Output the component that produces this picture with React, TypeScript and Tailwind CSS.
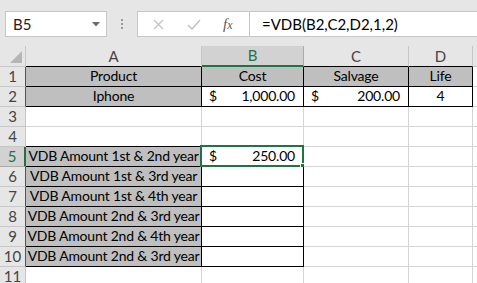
import React from "react";

const COLS = [
  { key: "A", w: "w-[176px]" },
  { key: "B", w: "w-[102px]" },
  { key: "C", w: "w-[105px]" },
  { key: "D", w: "w-[64px]" },
  { key: "", w: "w-[64px]" },
];

function bordered(r: number, c: number): boolean {
  if ((r === 1 || r === 2) && c >= 0 && c <= 3) return true;
  if (r >= 5 && r <= 10 && c >= 0 && c <= 1) return true;
  return false;
}

type Cell = { text?: string; align?: "center" | "left" | "right"; acct?: string; gray?: boolean };

const data: Record<string, Cell> = {
  "1-0": { text: "Product", align: "center", gray: true },
  "1-1": { text: "Cost", align: "center", gray: true },
  "1-2": { text: "Salvage", align: "center", gray: true },
  "1-3": { text: "Life", align: "center", gray: true },
  "2-0": { text: "Iphone", align: "center", gray: true },
  "2-1": { acct: "1,000.00" },
  "2-2": { acct: "200.00" },
  "2-3": { text: "4", align: "center" },
  "5-0": { text: "VDB Amount 1st & 2nd year", align: "center", gray: true },
  "5-1": { acct: "250.00" },
  "6-0": { text: "VDB Amount 1st & 3rd year", align: "center", gray: true },
  "7-0": { text: "VDB Amount 1st & 4th year", align: "center", gray: true },
  "8-0": { text: "VDB Amount 2nd & 3rd year", align: "center", gray: true },
  "9-0": { text: "VDB Amount 2nd & 4th year", align: "center", gray: true },
  "10-0": { text: "VDB Amount 2nd & 3rd year", align: "center", gray: true },
};

function DataCell({ r, c }: { r: number; c: number }) {
  const d = data[`${r}-${c}`];
  const rb = bordered(r, c) || bordered(r, c + 1);
  const bb = bordered(r, c) || bordered(r + 1, c);
  const selected = r === 5 && c === 1;
  return (
    <div
      className={[
        "relative shrink-0 h-full border-r border-b flex items-end pb-[1px] whitespace-nowrap text-[14px] tracking-[-0.2px] leading-[18px] text-black",
        COLS[c].w,
        rb ? "border-r-black" : "border-r-[#d4d4d4]",
        bb ? "border-b-black" : "border-b-[#d4d4d4]",
        d?.gray ? "bg-[#bfbfbf]" : "bg-white",
        d?.align === "center" ? "justify-center" : "",
      ].join(" ")}
    >
      {d?.text && <span>{d.text}</span>}
      {d?.acct && (
        <div className="flex w-full justify-between pl-[7px] pr-[8px]">
          <span>$</span>
          <span>{d.acct}</span>
        </div>
      )}
      {selected && (
        <>
          <div className="absolute left-[-2px] top-[-2px] right-[-1px] bottom-[-1px] border-2 border-[#217346]" />
          <div className="absolute right-[-4px] bottom-[-4px] w-[7px] h-[7px] bg-[#217346] border border-white" />
        </>
      )}
    </div>
  );
}

export default function App() {
  const rows = [1, 2, 3, 4, 5, 6, 7, 8, 9, 10, 11];
  return (
    <div
      className="w-[477px] h-[283px] overflow-hidden bg-white"
      style={{ fontFamily: "Lato, 'Open Sans', sans-serif" }}
    >
      {/* formula bar */}
      <div className="h-[46px] bg-[#e6e6e6] flex items-start pt-[11px] pl-[5px]">
        <div className="w-[102px] h-[26px] border border-[#c6c6c6] bg-white flex items-center justify-between pl-[7px] pr-[6px]">
          <span className="text-[15px] text-[#222] leading-none">B5</span>
          <svg width="8" height="5" viewBox="0 0 8 5">
            <polygon points="0,0 8,0 4,4.5" fill="#6b6b6b" />
          </svg>
        </div>
        <div className="w-[30px] h-[26px] flex flex-col items-center justify-center gap-[2px]">
          <div className="w-[2px] h-[2px] bg-[#9a9a9a]" />
          <div className="w-[2px] h-[2px] bg-[#9a9a9a]" />
          <div className="w-[2px] h-[2px] bg-[#9a9a9a]" />
        </div>
        <div className="flex-1 h-[26px] border border-r-0 border-[#c6c6c6] bg-white flex">
          <div className="w-[112px] h-full flex items-center border-r border-[#c6c6c6]">
            <svg className="ml-[15px]" width="11" height="11" viewBox="0 0 11 11">
              <path d="M1 1 L10 10 M10 1 L1 10" stroke="#c4c4c4" strokeWidth="1.4" />
            </svg>
            <svg className="ml-[23px]" width="14" height="11" viewBox="0 0 14 11">
              <path d="M1 6 L5 10 L13 1" stroke="#c4c4c4" strokeWidth="1.6" fill="none" />
            </svg>
            <span
              className="ml-[22px] text-[15px] italic text-[#5a5a5a] leading-none"
              style={{ fontFamily: "'Liberation Serif', serif" }}
            >
              f<span className="text-[12px]">x</span>
            </span>
          </div>
          <div className="flex-1 flex items-center pl-[12px] text-[15px] text-black whitespace-nowrap">
            =VDB(B2,C2,D2,1,2)
          </div>
        </div>
      </div>

      {/* column headers */}
      <div className="flex h-[21px]">
        <div className="w-[26px] shrink-0 h-full bg-[#e6e6e6] border-r border-b border-[#c6c6c6] relative">
          <svg className="absolute right-[3px] bottom-[3px]" width="12" height="12" viewBox="0 0 12 12">
            <polygon points="12,0 12,12 0,12" fill="#b5b5b5" />
          </svg>
        </div>
        {COLS.map((col, c) => {
          const sel = col.key === "B";
          return (
            <div
              key={c}
              className={[
                "shrink-0 h-full border-r flex items-end justify-center pb-[1px] text-[15px] leading-[18px]",
                col.w,
                sel
                  ? "bg-[#d2d2d2] text-[#217346] border-b-2 border-b-[#217346] border-r-[#ababab]"
                  : "bg-[#e6e6e6] text-[#444] border-b border-r-[#c6c6c6]",
                !sel && bordered(1, c) ? "border-b-black" : "",
                !sel && !bordered(1, c) ? "border-b-[#c6c6c6]" : "",
              ].join(" ")}
            >
              {col.key}
            </div>
          );
        })}
      </div>

      {/* rows */}
      {rows.map((r) => {
        const sel = r === 5;
        return (
          <div key={r} className="flex h-[20px]">
            <div
              className={[
                "w-[26px] shrink-0 h-full border-b flex items-end justify-center pb-[1px] text-[15px] leading-[18px]",
                sel
                  ? "bg-[#d2d2d2] text-[#217346] border-r-2 border-r-[#217346] border-b-[#ababab]"
                  : "bg-[#e6e6e6] text-[#444] border-r border-b-[#c6c6c6]",
                !sel && bordered(r, 0) ? "border-r-[#555]" : "",
                !sel && !bordered(r, 0) ? "border-r-[#c6c6c6]" : "",
              ].join(" ")}
            >
              {r}
            </div>
            {COLS.map((_, c) => (
              <DataCell key={c} r={r} c={c} />
            ))}
          </div>
        );
      })}
    </div>
  );
}
